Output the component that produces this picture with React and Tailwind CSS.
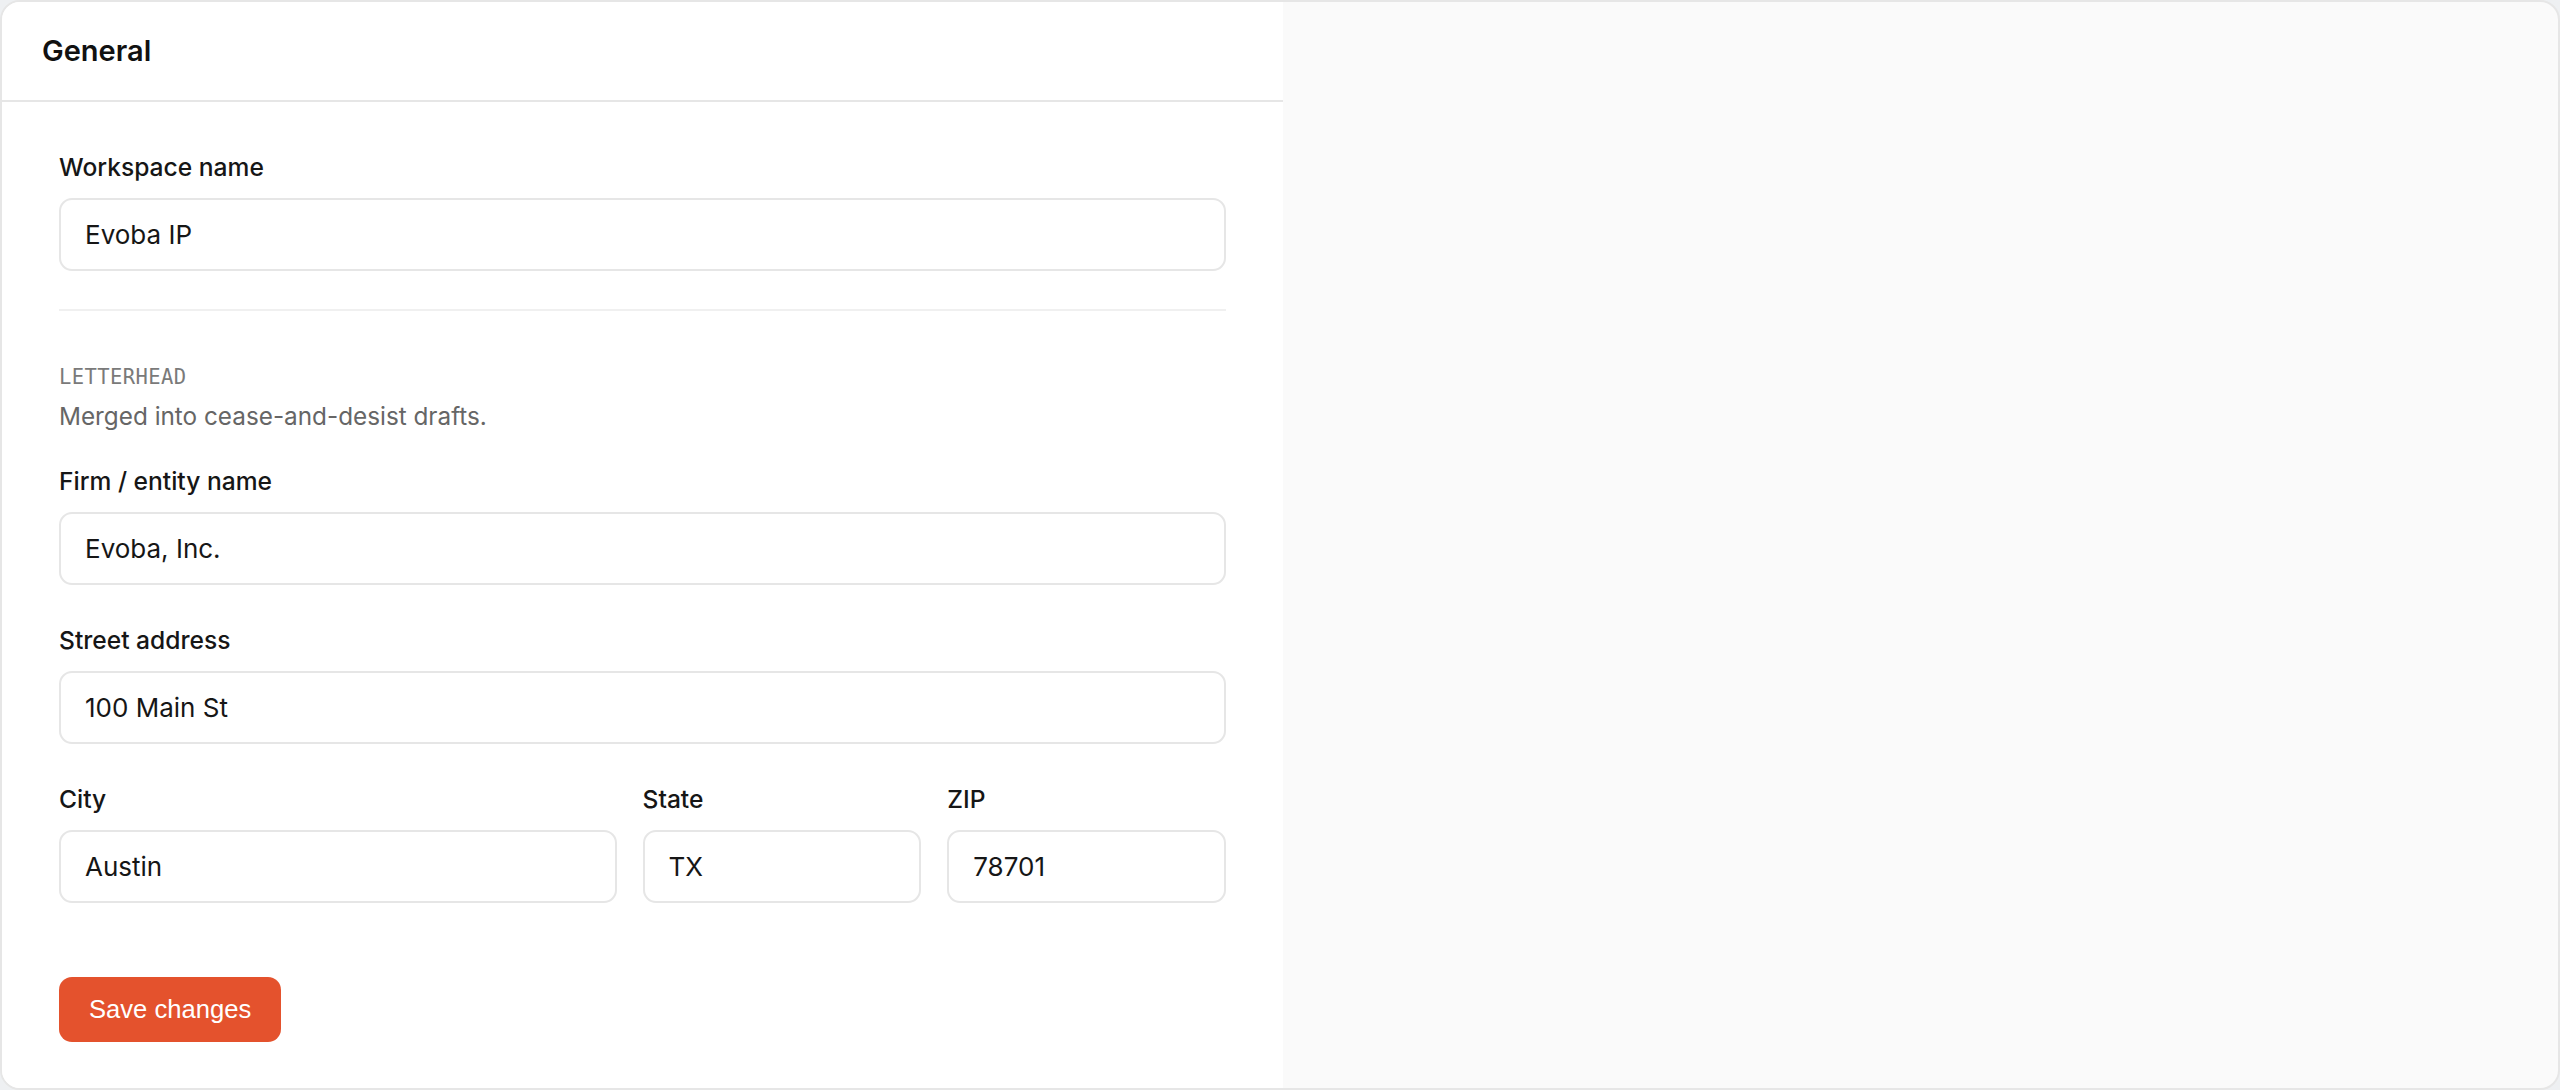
import { useState } from "react";

function Field({ label, value, onChange, className = "" }) {
  return (
    <label className={`flex flex-col ${className}`}>
      <span className="text-[24.6px] leading-[36px] font-medium text-[#161616] mb-[13px]">
        {label}
      </span>
      <input
        type="text"
        value={value}
        onChange={(e) => onChange(e.target.value)}
        className="h-[73px] w-full px-[24px] border-2 border-[#e6e6e6] rounded-[13px] bg-white text-[26px] text-[#161616] outline-none"
      />
    </label>
  );
}

export default function App() {
  const [form, setForm] = useState({
    workspace: "Evoba IP",
    firm: "Evoba, Inc.",
    street: "100 Main St",
    city: "Austin",
    state: "TX",
    zip: "78701",
  });

  const set = (key) => (v) => setForm({ ...form, [key]: v });

  return (
    <div className="h-[1090px] w-full bg-[#eef0f2] font-['Inter',sans-serif]">
      <div className="h-full flex overflow-hidden border-2 border-[#e6e6e6] rounded-[20px] bg-[#fafafa]">
        <div className="w-[1281px] shrink-0 bg-white flex flex-col">
          <div className="h-[100px] shrink-0 flex items-center px-[40px] border-b-2 border-[#e6e6e6]">
            <h1 className="text-[29px] font-semibold text-[#111]">General</h1>
          </div>

          <div className="px-[57px] pt-[47px] flex flex-col">
            <Field
              label="Workspace name"
              value={form.workspace}
              onChange={set("workspace")}
            />

            <div className="mt-[38px] h-[2px] bg-[#f0f0f0]" />

            <p className="mt-[51px] font-['DejaVu_Sans_Mono',monospace] text-[20.5px] leading-[30px] tracking-[0.02em] text-[#7a7a7a]">
              LETTERHEAD
            </p>
            <p className="mt-[6px] text-[24.3px] leading-[36px] text-[#666]">
              Merged into cease-and-desist drafts.
            </p>

            <Field
              className="mt-[29px]"
              label="Firm / entity name"
              value={form.firm}
              onChange={set("firm")}
            />
            <Field
              className="mt-[37px]"
              label="Street address"
              value={form.street}
              onChange={set("street")}
            />

            <div className="mt-[37px] grid grid-cols-[2fr_1fr_1fr] gap-[26px]">
              <Field label="City" value={form.city} onChange={set("city")} />
              <Field label="State" value={form.state} onChange={set("state")} />
              <Field label="ZIP" value={form.zip} onChange={set("zip")} />
            </div>

            <div className="mt-[74px]">
              <button
                type="button"
                className="h-[65px] px-[30px] rounded-[13px] bg-[#e4522d] text-white text-[25.6px] font-['Liberation_Sans',sans-serif] hover:bg-[#d4461f]"
              >
                Save changes
              </button>
            </div>
          </div>
        </div>
        <div className="flex-1" />
      </div>
    </div>
  );
}
